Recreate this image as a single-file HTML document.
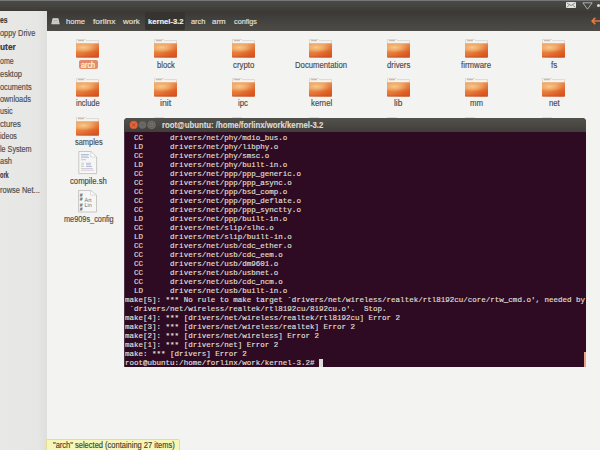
<!DOCTYPE html>
<html><head><meta charset="utf-8">
<style>
*{margin:0;padding:0;box-sizing:border-box}
html,body{width:600px;height:450px;overflow:hidden;background:#f3f3f1;font-family:"Liberation Sans",sans-serif;position:relative}
.abs{position:absolute}
.sb{position:absolute;font-size:8px;color:#4a4a4a;white-space:nowrap;line-height:10px}
.sbh{font-weight:bold;color:#3a3a3a}
.crumb{position:absolute;top:16px;font-size:7.6px;line-height:11px;color:#dcdad5;white-space:nowrap}
.lbl{position:absolute;font-size:7.5px;line-height:10px;color:#3c3c3c;white-space:nowrap;text-align:center;width:100px}
.ic{position:absolute}
.ft{position:absolute;white-space:nowrap;transform-origin:0 50%}
#tcontent{font-family:"Liberation Mono",monospace;font-size:7.52px;line-height:9px;color:#e4e0dc;white-space:pre;-webkit-text-stroke:0.12px #e4e0dc}
</style></head><body>
<div class="abs" style="left:0;top:0;width:600px;height:12px;background:linear-gradient(#4b4a45,#45443f 50%,#3a3935)"></div>
<div class="abs" style="left:0;top:0;width:600px;height:1px;background:#737779"></div>
<div class="abs" style="left:47px;top:12px;width:553px;height:19px;background:linear-gradient(#3a3935,#44423e 45%,#4d4b46)"></div>
<div class="abs" style="left:0;top:11px;width:47px;height:439px;background:linear-gradient(to right,#e8e8e6 0,#e6e6e4 80%,#dededc 100%)"></div>
<div class="ft" style="left:0.20px;top:14.60px;font-size:8.4px;line-height:10px;font-weight:bold;transform:scaleX(0.8147);color:#3a3a3a;-webkit-text-stroke:0.15px #3a3a3a;">es</div>
<div class="ft" style="left:0.20px;top:28.20px;font-size:8.4px;line-height:10px;font-weight:normal;transform:scaleX(0.8818);color:#4c4c4c;-webkit-text-stroke:0.15px #4c4c4c;">oppy Drive</div>
<div class="ft" style="left:0.20px;top:42.00px;font-size:8.4px;line-height:10px;font-weight:bold;transform:scaleX(0.9982);color:#3a3a3a;-webkit-text-stroke:0.15px #3a3a3a;">uter</div>
<div class="ft" style="left:0.20px;top:56.30px;font-size:8.4px;line-height:10px;font-weight:normal;transform:scaleX(0.8345);color:#4c4c4c;-webkit-text-stroke:0.15px #4c4c4c;">ome</div>
<div class="ft" style="left:0.20px;top:69.10px;font-size:8.4px;line-height:10px;font-weight:normal;transform:scaleX(0.8911);color:#4c4c4c;-webkit-text-stroke:0.15px #4c4c4c;">esktop</div>
<div class="ft" style="left:0.20px;top:81.50px;font-size:8.4px;line-height:10px;font-weight:normal;transform:scaleX(0.8702);color:#4c4c4c;-webkit-text-stroke:0.15px #4c4c4c;">ocuments</div>
<div class="ft" style="left:0.20px;top:93.70px;font-size:8.4px;line-height:10px;font-weight:normal;transform:scaleX(0.8731);color:#4c4c4c;-webkit-text-stroke:0.15px #4c4c4c;">ownloads</div>
<div class="ft" style="left:0.20px;top:105.70px;font-size:8.4px;line-height:10px;font-weight:normal;transform:scaleX(0.8520);color:#4c4c4c;-webkit-text-stroke:0.15px #4c4c4c;">usic</div>
<div class="ft" style="left:0.20px;top:118.60px;font-size:8.4px;line-height:10px;font-weight:normal;transform:scaleX(0.9162);color:#4c4c4c;-webkit-text-stroke:0.15px #4c4c4c;">ctures</div>
<div class="ft" style="left:0.20px;top:130.90px;font-size:8.4px;line-height:10px;font-weight:normal;transform:scaleX(0.8437);color:#4c4c4c;-webkit-text-stroke:0.15px #4c4c4c;">ideos</div>
<div class="ft" style="left:0.20px;top:143.50px;font-size:8.4px;line-height:10px;font-weight:normal;transform:scaleX(0.8591);color:#4c4c4c;-webkit-text-stroke:0.15px #4c4c4c;">le System</div>
<div class="ft" style="left:0.20px;top:156.00px;font-size:8.4px;line-height:10px;font-weight:normal;transform:scaleX(0.8879);color:#4c4c4c;-webkit-text-stroke:0.15px #4c4c4c;">ash</div>
<div class="ft" style="left:0.20px;top:170.20px;font-size:8.4px;line-height:10px;font-weight:bold;transform:scaleX(0.6668);color:#3a3a3a;-webkit-text-stroke:0.15px #3a3a3a;">ork</div>
<div class="ft" style="left:0.20px;top:184.60px;font-size:8.4px;line-height:10px;font-weight:normal;transform:scaleX(0.8906);color:#4c4c4c;-webkit-text-stroke:0.15px #4c4c4c;">rowse Net...</div>
<div class="abs" style="left:145px;top:12px;width:40px;height:18px;background:#353431;border-radius:2px"></div>
<svg class="abs" style="left:50.5px;top:18px" width="9" height="7" viewBox="0 0 9 7"><path d="M1.6 0.3 H7.4 L8.7 6.3 H0.3 Z" fill="#d9d7d2"/><path d="M2.2 3.2 Q3 1.6 4 3 Q5 1.6 6.8 3.2" stroke="#8a8884" stroke-width="0.7" fill="none"/><rect x="0.6" y="4.6" width="7.8" height="0.6" fill="#a9a7a2"/></svg>
<div class="ft" style="left:66.00px;top:16.90px;font-size:8.0px;line-height:10px;font-weight:normal;transform:scaleX(0.9493);color:#e4e2dd;-webkit-text-stroke:0.15px #e4e2dd;">home</div>
<div class="ft" style="left:92.60px;top:16.90px;font-size:8.0px;line-height:10px;font-weight:normal;transform:scaleX(1.0495);color:#e4e2dd;-webkit-text-stroke:0.15px #e4e2dd;">forlinx</div>
<div class="ft" style="left:122.60px;top:16.90px;font-size:8.0px;line-height:10px;font-weight:normal;transform:scaleX(0.9946);color:#e4e2dd;-webkit-text-stroke:0.15px #e4e2dd;">work</div>
<div class="ft" style="left:148.00px;top:16.90px;font-size:8.0px;line-height:10px;font-weight:bold;transform:scaleX(0.9529);color:#f0eee9;-webkit-text-stroke:0.15px #f0eee9;">kernel-3.2</div>
<div class="ft" style="left:190.60px;top:16.90px;font-size:8.0px;line-height:10px;font-weight:normal;transform:scaleX(0.9253);color:#e4e2dd;-webkit-text-stroke:0.15px #e4e2dd;">arch</div>
<div class="ft" style="left:212.40px;top:16.90px;font-size:8.0px;line-height:10px;font-weight:normal;transform:scaleX(0.9868);color:#e4e2dd;-webkit-text-stroke:0.15px #e4e2dd;">arm</div>
<div class="ft" style="left:234.00px;top:16.90px;font-size:8.0px;line-height:10px;font-weight:normal;transform:scaleX(0.9070);color:#e4e2dd;-webkit-text-stroke:0.15px #e4e2dd;">configs</div>
<svg class="abs" style="left:566px;top:2.3px" width="10" height="6" viewBox="0 0 10 6"><rect x="0" y="0" width="10" height="6" fill="#e4e2dd"/><path d="M0.6 0.7 L5 3.6 L9.4 0.7 M0.6 5.4 L3.4 3 M9.4 5.4 L6.6 3" stroke="#6a6965" stroke-width="0.7" fill="none"/></svg>
<svg class="abs" style="left:582px;top:2px" width="11" height="8" viewBox="0 0 11 8"><path d="M0.8 0.8 H10.2 L5.5 7.2 Z" stroke="#c9c7c2" stroke-width="0.8" fill="none"/></svg>
<div class="abs" style="left:597px;top:4px;width:3px;height:3px;border-radius:50%;background:#e0ded9"></div>
<svg class="abs" style="left:590.5px;top:17.3px" width="10" height="8" viewBox="0 0 10 8"><path d="M4.3 0.8 L1.1 4 L4.3 7.2 M1.3 4 H10" stroke="#e67a38" stroke-width="1.7" fill="none"/></svg>
<svg width="0" height="0" style="position:absolute"><defs>
<linearGradient id="fl" x1="0" y1="0" x2="0" y2="1">
<stop offset="0" stop-color="#eea66a"/><stop offset="0.45" stop-color="#ec9752"/><stop offset="0.62" stop-color="#e8803e"/><stop offset="1" stop-color="#e2672c"/></linearGradient>
<radialGradient id="fh" cx="0.32" cy="0.3" r="0.6" gradientTransform="translate(0.32,0.3) scale(1,0.62) translate(-0.32,-0.3)">
<stop offset="0" stop-color="#f6cb8a" stop-opacity="1"/><stop offset="0.55" stop-color="#f3b676" stop-opacity="0.55"/><stop offset="1" stop-color="#f0a060" stop-opacity="0"/></radialGradient>
<linearGradient id="fr" x1="0" y1="0" x2="1" y2="0.6">
<stop offset="0.5" stop-color="#d64814" stop-opacity="0"/><stop offset="1" stop-color="#d64814" stop-opacity="0.65"/></linearGradient>
<symbol id="folder" viewBox="0 0 23 19">
<path d="M0.5 0.5 H9.3 L10.6 1.6 H22.5 V6 H0.5 Z" fill="#f6f4f1" stroke="#cdc8c2" stroke-width="0.6"/>
<rect x="2" y="1.2" width="6" height="1" fill="#bfae9f"/>
<rect x="0" y="4.2" width="23" height="14.3" rx="0.8" fill="url(#fl)"/>
<rect x="0" y="4.2" width="23" height="14.3" rx="0.8" fill="url(#fr)"/>
<rect x="0" y="4.2" width="23" height="14.3" rx="0.8" fill="url(#fh)"/>
<rect x="0.3" y="17.6" width="22.4" height="0.9" fill="#a9593a" opacity="0.6"/>
</symbol>
</defs></svg>
<svg class="ic" style="left:76.1px;top:39.2px" width="23" height="19"><use href="#folder"/></svg>
<div class="abs" style="left:78.5px;top:59.8px;width:19.5px;height:9.7px;background:#e38b6b;border-radius:2px"></div>
<div class="ft" style="left:81.00px;top:59.80px;font-size:8.4px;line-height:10px;font-weight:normal;transform:scaleX(0.8591);color:#fff;-webkit-text-stroke:0.15px #fff;">arch</div>
<svg class="ic" style="left:153.8px;top:39.2px" width="23" height="19"><use href="#folder"/></svg>
<div class="ft" style="left:156.75px;top:59.70px;font-size:8.4px;line-height:10px;font-weight:normal;transform:scaleX(0.9073);color:#4a4a4a;-webkit-text-stroke:0.15px #4a4a4a;">block</div>
<svg class="ic" style="left:231.5px;top:39.2px" width="23" height="19"><use href="#folder"/></svg>
<div class="ft" style="left:233.00px;top:59.70px;font-size:8.4px;line-height:10px;font-weight:normal;transform:scaleX(0.9315);color:#4a4a4a;-webkit-text-stroke:0.15px #4a4a4a;">crypto</div>
<svg class="ic" style="left:309.2px;top:39.2px" width="23" height="19"><use href="#folder"/></svg>
<div class="ft" style="left:295.40px;top:59.60px;font-size:8.4px;line-height:10px;font-weight:normal;transform:scaleX(0.9229);color:#4a4a4a;-webkit-text-stroke:0.15px #4a4a4a;">Documentation</div>
<svg class="ic" style="left:386.9px;top:39.2px" width="23" height="19"><use href="#folder"/></svg>
<div class="ft" style="left:387.00px;top:59.60px;font-size:8.4px;line-height:10px;font-weight:normal;transform:scaleX(0.9268);color:#4a4a4a;-webkit-text-stroke:0.15px #4a4a4a;">drivers</div>
<svg class="ic" style="left:464.6px;top:39.2px" width="23" height="19"><use href="#folder"/></svg>
<div class="ft" style="left:461.25px;top:59.70px;font-size:8.4px;line-height:10px;font-weight:normal;transform:scaleX(0.9343);color:#4a4a4a;-webkit-text-stroke:0.15px #4a4a4a;">firmware</div>
<svg class="ic" style="left:542.3px;top:39.2px" width="23" height="19"><use href="#folder"/></svg>
<div class="ft" style="left:550.75px;top:59.70px;font-size:8.4px;line-height:10px;font-weight:normal;transform:scaleX(0.9592);color:#4a4a4a;-webkit-text-stroke:0.15px #4a4a4a;">fs</div>
<svg class="ic" style="left:76.1px;top:78.0px" width="23" height="19"><use href="#folder"/></svg>
<div class="ft" style="left:76.40px;top:98.20px;font-size:8.4px;line-height:10px;font-weight:normal;transform:scaleX(0.8890);color:#4a4a4a;-webkit-text-stroke:0.15px #4a4a4a;">include</div>
<svg class="ic" style="left:153.8px;top:78.0px" width="23" height="19"><use href="#folder"/></svg>
<div class="ft" style="left:160.00px;top:98.20px;font-size:8.4px;line-height:10px;font-weight:normal;transform:scaleX(1.0496);color:#4a4a4a;-webkit-text-stroke:0.15px #4a4a4a;">init</div>
<svg class="ic" style="left:231.5px;top:78.0px" width="23" height="19"><use href="#folder"/></svg>
<div class="ft" style="left:238.25px;top:98.20px;font-size:8.4px;line-height:10px;font-weight:normal;transform:scaleX(0.9329);color:#4a4a4a;-webkit-text-stroke:0.15px #4a4a4a;">ipc</div>
<svg class="ic" style="left:309.2px;top:78.0px" width="23" height="19"><use href="#folder"/></svg>
<div class="ft" style="left:310.60px;top:98.00px;font-size:8.4px;line-height:10px;font-weight:normal;transform:scaleX(0.9293);color:#4a4a4a;-webkit-text-stroke:0.15px #4a4a4a;">kernel</div>
<svg class="ic" style="left:386.9px;top:78.0px" width="23" height="19"><use href="#folder"/></svg>
<div class="ft" style="left:394.40px;top:98.10px;font-size:8.4px;line-height:10px;font-weight:normal;transform:scaleX(0.9892);color:#4a4a4a;-webkit-text-stroke:0.15px #4a4a4a;">lib</div>
<svg class="ic" style="left:464.6px;top:78.0px" width="23" height="19"><use href="#folder"/></svg>
<div class="ft" style="left:470.00px;top:98.20px;font-size:8.4px;line-height:10px;font-weight:normal;transform:scaleX(0.9317);color:#4a4a4a;-webkit-text-stroke:0.15px #4a4a4a;">mm</div>
<svg class="ic" style="left:542.3px;top:78.0px" width="23" height="19"><use href="#folder"/></svg>
<div class="ft" style="left:548.75px;top:98.20px;font-size:8.4px;line-height:10px;font-weight:normal;transform:scaleX(0.9223);color:#4a4a4a;-webkit-text-stroke:0.15px #4a4a4a;">net</div>
<svg class="ic" style="left:76.1px;top:116.7px" width="23" height="19"><use href="#folder"/></svg>
<div class="ft" style="left:74.60px;top:137.30px;font-size:8.4px;line-height:10px;font-weight:normal;transform:scaleX(0.8882);color:#4a4a4a;-webkit-text-stroke:0.15px #4a4a4a;">samples</div>
<svg class="ic" style="left:153.8px;top:116.7px" width="23" height="19"><use href="#folder"/></svg>
<svg class="ic" style="left:231.5px;top:116.7px" width="23" height="19"><use href="#folder"/></svg>
<svg class="ic" style="left:309.2px;top:116.7px" width="23" height="19"><use href="#folder"/></svg>
<svg class="ic" style="left:386.9px;top:116.7px" width="23" height="19"><use href="#folder"/></svg>
<svg class="ic" style="left:464.6px;top:116.7px" width="23" height="19"><use href="#folder"/></svg>
<svg class="ic" style="left:542.3px;top:116.7px" width="23" height="19"><use href="#folder"/></svg>
<svg class="ic" style="left:78px;top:151px" width="20" height="24" viewBox="0 0 20 24">
<path d="M0.8 0.5 H12.8 L18.6 6 V22.6 H0.8 Z" fill="#f6f6f4" stroke="#bdbdbb" stroke-width="0.8"/>
<path d="M12.8 0.5 V6 H18.6 Z" fill="#fdfdfd" stroke="#c8c8c6" stroke-width="0.6"/>
<g opacity="0.75">
<rect x="3" y="3" width="8" height="0.9" fill="#93a8d2"/><rect x="3" y="4.6" width="7.5" height="0.9" fill="#93a8d2"/><rect x="3" y="6.2" width="8" height="0.9" fill="#a2b5da"/>
<rect x="3" y="8.3" width="5" height="0.9" fill="#dc9cc0"/>
<rect x="3" y="11.8" width="3" height="0.9" fill="#a9d4a0"/><rect x="3" y="13.4" width="3" height="0.9" fill="#a9d4a0"/><rect x="3" y="15" width="3" height="0.9" fill="#a9d4a0"/>
<rect x="8" y="11.8" width="5" height="0.9" fill="#93a8d2"/><rect x="8" y="13.4" width="5" height="0.9" fill="#93a8d2"/><rect x="8" y="15" width="6" height="0.9" fill="#93a8d2"/>
<rect x="3" y="17.2" width="12" height="0.9" fill="#cda5d0"/><rect x="3" y="18.8" width="13" height="0.9" fill="#c4c4c4"/>
</g>
</svg>
<div class="ft" style="left:69.80px;top:175.90px;font-size:8.4px;line-height:10px;font-weight:normal;transform:scaleX(0.9193);color:#4a4a4a;-webkit-text-stroke:0.15px #4a4a4a;">compile.sh</div>
<svg class="ic" style="left:78px;top:190px" width="20" height="23" viewBox="0 0 20 23">
<path d="M0.6 0.5 H12.5 L18.5 5 V22 H0.6 Z" fill="#f6f6f4" stroke="#bdbdbb" stroke-width="0.8"/>
<path d="M12.5 0.5 V5 H18.5 Z" fill="#fdfdfd" stroke="#c8c8c6" stroke-width="0.6"/>
<g fill="#5a5a5a" font-family="Liberation Sans" font-size="5.2px" font-weight="bold"><text x="1.8" y="6.6">#</text><text x="1.8" y="11.3">#</text><text x="1.8" y="16.6">#</text><text x="1.8" y="21">#</text></g>
<g fill="#6e6e6e" font-family="Liberation Sans" font-size="5.4px"><text x="6.6" y="11.9">Art</text><text x="6.6" y="16.9">Lin</text></g>
</svg>
<div class="ft" style="left:63.60px;top:213.70px;font-size:8.4px;line-height:10px;font-weight:normal;transform:scaleX(0.8748);color:#4a4a4a;-webkit-text-stroke:0.15px #4a4a4a;">me909s_config</div>
<div class="abs" style="left:124px;top:118px;width:462px;height:249px;background:#2e0a23;border-radius:4px 4px 0 0;overflow:hidden">
<div class="abs" style="left:0;top:0;width:462px;height:14px;background:linear-gradient(#52514c,#3f3e3a)"></div>
<svg class="abs" style="left:0;top:0" width="40" height="14" viewBox="0 0 40 14">
<circle cx="9.7" cy="6.9" r="3.9" fill="#e5653b" stroke="#c9552f" stroke-width="0.5"/>
<path d="M8.2 5.4 L11.2 8.4 M11.2 5.4 L8.2 8.4" stroke="#a8401f" stroke-width="0.9"/>
<circle cx="18.5" cy="6.9" r="3.8" fill="#6a6965" stroke="#5c5b57" stroke-width="0.5"/>
<path d="M17 7 H20" stroke="#5a5955" stroke-width="0.8"/>
<circle cx="27.5" cy="6.9" r="3.8" fill="#5e5d59" stroke="#75746f" stroke-width="0.9"/>
<rect x="26.1" y="5.5" width="2.8" height="2.8" fill="none" stroke="#807f7a" stroke-width="0.7"/>
</svg>
<div class="ft" style="left:38.00px;top:1.80px;font-size:8.6px;line-height:10px;font-weight:bold;transform:scaleX(0.9044);color:#dfdbd2;-webkit-text-stroke:0.15px #dfdbd2;">root@ubuntu: /home/forlinx/work/kernel-3.2</div>
<div id="tcontent" class="abs" style="left:1px;top:15.5px">  CC      drivers/net/phy/mdio_bus.o
  LD      drivers/net/phy/libphy.o
  CC      drivers/net/phy/smsc.o
  LD      drivers/net/phy/built-in.o
  CC      drivers/net/ppp/ppp_generic.o
  CC      drivers/net/ppp/ppp_async.o
  CC      drivers/net/ppp/bsd_comp.o
  CC      drivers/net/ppp/ppp_deflate.o
  CC      drivers/net/ppp/ppp_synctty.o
  LD      drivers/net/ppp/built-in.o
  CC      drivers/net/slip/slhc.o
  LD      drivers/net/slip/built-in.o
  CC      drivers/net/usb/cdc_ether.o
  CC      drivers/net/usb/cdc_eem.o
  CC      drivers/net/usb/dm9601.o
  CC      drivers/net/usb/usbnet.o
  CC      drivers/net/usb/cdc_ncm.o
  LD      drivers/net/usb/built-in.o
make[5]: *** No rule to make target `drivers/net/wireless/realtek/rtl8192cu/core/rtw_cmd.o', needed by
 `drivers/net/wireless/realtek/rtl8192cu/8192cu.o'.  Stop.
make[4]: *** [drivers/net/wireless/realtek/rtl8192cu] Error 2
make[3]: *** [drivers/net/wireless/realtek] Error 2
make[2]: *** [drivers/net/wireless] Error 2
make[1]: *** [drivers/net] Error 2
make: *** [drivers] Error 2
root@ubuntu:/home/forlinx/work/kernel-3.2# <span style="background:#dcdcdc">&nbsp;</span></div>
<div class="abs" style="left:460px;top:234px;width:2px;height:15px;background:#e8a384"></div>
<div class="abs" style="left:0;top:14px;width:1px;height:235px;background:#4a3444"></div>
</div>
<div class="abs" style="left:46.3px;top:439.3px;width:134px;height:14px;background:#f8f6b6;border:1px solid #e2dd98;border-radius:2px"></div>
<div class="ft" style="left:52.50px;top:439.90px;font-size:8.6px;line-height:10px;font-weight:normal;transform:scaleX(0.8735);color:#404036;-webkit-text-stroke:0.15px #404036;">"arch" selected (containing 27 items)</div>
</body></html>
